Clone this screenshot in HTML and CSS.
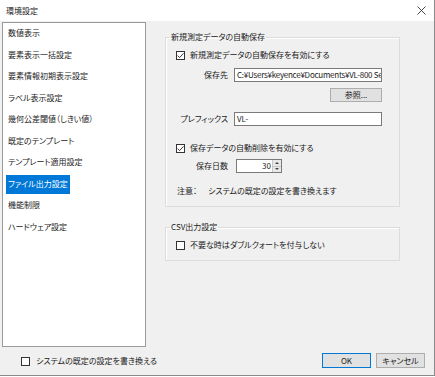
FILE: index.html
```html
<!DOCTYPE html>
<html lang="ja">
<head>
  <meta charset="UTF-8" />
  <title>環境設定</title>
  <link rel="stylesheet" href="styles.css">
</head>
<body>
  <div class="window">
    <div class="titlebar">
      <span class="title">環境設定</span>
      <svg class="close" width="9" height="9" viewBox="0 0 9 9">
        <path d="M0.5 0.5 L8.5 8.5 M8.5 0.5 L0.5 8.5" stroke="#333" stroke-width="0.9" fill="none"/>
      </svg>
    </div>

    <div class="panes">
      <ul class="nav">
        <li><span>数値表示</span></li>
        <li><span>要素表示一括設定</span></li>
        <li><span>要素情報初期表示設定</span></li>
        <li><span>ラベル表示設定</span></li>
        <li><span>幾何公差閾値（しきい値）</span></li>
        <li><span>既定のテンプレート</span></li>
        <li><span>テンプレート適用設定</span></li>
        <li class="active"><span>ファイル出力設定</span></li>
        <li><span>機能制限</span></li>
        <li><span>ハードウェア設定</span></li>
      </ul>

      <div class="settings">
        <fieldset class="group group-save">
          <legend>新規測定データの自動保存</legend>

          <div class="check-row">
            <span class="check">
              <svg width="9" height="9" viewBox="0 0 9 9"><path d="M1.6 4.6 L3.6 6.6 L7.5 2.3" stroke="#222" stroke-width="0.9" fill="none"/></svg>
            </span>
            <span>新規測定データの自動保存を有効にする</span>
          </div>

          <div class="field-row row-path">
            <span class="field-label">保存先</span>
            <div class="textbox textbox-path">C:¥Users¥keyence¥Documents¥VL-800 Se</div>
          </div>

          <div class="button-row">
            <div class="btn btn-browse">参照...</div>
          </div>

          <div class="field-row row-prefix">
            <span class="field-label">プレフィックス</span>
            <div class="textbox">VL-</div>
          </div>

          <div class="check-row row-delete">
            <span class="check">
              <svg width="9" height="9" viewBox="0 0 9 9"><path d="M1.6 4.6 L3.6 6.6 L7.5 2.3" stroke="#222" stroke-width="0.9" fill="none"/></svg>
            </span>
            <span>保存データの自動削除を有効にする</span>
          </div>

          <div class="field-row row-days">
            <span class="field-label">保存日数</span>
            <div class="spin">
              <span class="spin-value">30</span>
              <span class="spin-buttons">
                <span class="spin-up"></span>
                <span class="spin-down"></span>
              </span>
            </div>
          </div>

          <div class="note">
            <span class="note-head">注意：</span>
            <span>システムの既定の設定を書き換えます</span>
          </div>
        </fieldset>

        <fieldset class="group group-csv">
          <legend>CSV出力設定</legend>
          <div class="check-row">
            <span class="check"></span>
            <span>不要な時はダブルクォートを付与しない</span>
          </div>
        </fieldset>
      </div>
    </div>

    <div class="footer">
      <div class="check-row">
        <span class="check"></span>
        <span>システムの既定の設定を書き換える</span>
      </div>
      <div class="actions">
        <div class="btn btn-default">OK</div>
        <div class="btn">キャンセル</div>
      </div>
    </div>
  </div>
</body>
</html>
```

FILE: styles.css
```css
:root {
  --face: #f0f0f0;
  --line: #dcdcdc;
  --box: #7a7a7a;
  --accent: #0078d7;
  --text: #1a1a1a;
  --font: 'Noto Sans CJK JP', 'Noto Sans', sans-serif;
}

html, body {
  margin: 0;
  padding: 0;
  background: #fff;
}

.window {
  width: 435px;
  height: 376px;
  box-sizing: border-box;
  display: flex;
  flex-direction: column;
  background: var(--face);
  border-right: 1px solid #8a8a8a;
  border-bottom: 1px solid #8a8a8a;
  font-family: var(--font);
  font-size: 8px;
  line-height: 10px;
  font-feature-settings: "palt";
  color: var(--text);
}

.titlebar {
  height: 21px;
  flex: none;
  display: flex;
  align-items: center;
  justify-content: space-between;
  padding: 0 8px 0 6px;
  background: #fff;
}

.close {
  display: block;
}

.panes {
  height: 326px;
  flex: none;
  display: flex;
  padding: 1px 0 0 2px;
  box-sizing: border-box;
}

/* left navigation list */
.nav {
  list-style: none;
  margin: 0;
  padding: 0;
  width: 144px;
  height: 325px;
  box-sizing: border-box;
  border: 1px solid #9a9a9a;
  background: #fff;
}

.nav li {
  height: 21.5px;
  display: flex;
  align-items: center;
  padding-left: 3px;
}

.nav li span {
  padding: 4px 2px 5px;
}

.nav li.active span {
  background: var(--accent);
  color: #fff;
}

/* right settings */
.settings {
  margin-left: 19px;
  padding-top: 10px;
  display: flex;
  flex-direction: column;
  gap: 15px;
}

.group {
  width: 235px;
  box-sizing: border-box;
  margin: 0;
  padding: 0 5px 10px;
  border: 1px solid var(--line);
  box-shadow: inset 1px 1px 0 #fff;
}

.group legend {
  padding: 0 1px;
  margin-left: -1px;
  line-height: 10px;
}

.check-row {
  display: flex;
  align-items: center;
  height: 10px;
  gap: 5px;
}

.group .check-row {
  padding-left: 5px;
  margin-top: 8px;
}

.check {
  width: 9px;
  height: 9px;
  box-sizing: border-box;
  border: 1px solid #333;
  background: #fff;
  display: flex;
  align-items: center;
  justify-content: center;
  flex: none;
}

.check svg {
  display: block;
  margin: -1px;
}

.field-row {
  display: flex;
  align-items: center;
  height: 14px;
}

.field-label {
  width: 57px;
  text-align: right;
  margin-right: 6px;
  flex: none;
}

.textbox {
  width: 148px;
  height: 14px;
  box-sizing: border-box;
  border: 1px solid var(--box);
  background: #fff;
  padding: 1px 2px;
  line-height: 10px;
  white-space: nowrap;
  overflow: hidden;
}

.textbox-path {
  letter-spacing: -0.25px;
}

.row-path {
  margin-top: 8px;
}

.button-row {
  display: flex;
  justify-content: flex-end;
  width: 211px;
  margin-top: 6px;
}

.btn {
  width: 49px;
  height: 15px;
  box-sizing: border-box;
  border: 1px solid #adadad;
  background: #e1e1e1;
  display: flex;
  align-items: center;
  justify-content: center;
}

.btn-browse {
  width: 52px;
  height: 14px;
}

.row-prefix {
  margin-top: 10px;
}

.group .row-delete {
  margin-top: 17px;
}

.row-days {
  margin-top: 6px;
}

.spin {
  margin-left: 2px;
  width: 46px;
  height: 14px;
  box-sizing: border-box;
  border: 1px solid var(--box);
  background: #fff;
  display: flex;
}

.spin-value {
  flex: 1;
  text-align: right;
  padding-right: 1px;
  line-height: 12px;
}

.spin-buttons {
  width: 8px;
  display: flex;
  flex-direction: column;
  border-left: 1px solid #c8c8c8;
}

.spin-up,
.spin-down {
  flex: 1;
  background: #e8e8e8;
  display: flex;
  align-items: center;
  justify-content: center;
}

.spin-up {
  border-bottom: 1px solid #c8c8c8;
}

.spin-up::after,
.spin-down::after {
  content: '';
  border-left: 2px solid transparent;
  border-right: 2px solid transparent;
}

.spin-up::after {
  border-bottom: 2px solid #444;
}

.spin-down::after {
  border-top: 2px solid #444;
}

.note {
  margin-top: 13px;
  padding-left: 6px;
  display: flex;
  height: 10px;
}

.note-head {
  width: 31px;
}

/* bottom row */
.footer {
  flex: 1;
  display: flex;
  align-items: center;
  justify-content: space-between;
  padding: 0 9px 0 21px;
}

.footer .check-row {
  gap: 6px;
}

.actions {
  display: flex;
  gap: 5px;
  margin-top: -1px;
}

.btn-default {
  border-color: var(--accent);
}
```
